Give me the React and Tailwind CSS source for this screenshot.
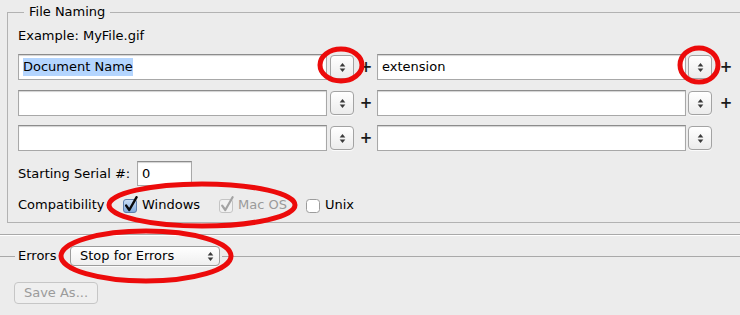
import React from 'react';

const font = { fontFamily: '"DejaVu Sans", "Liberation Sans", sans-serif' };

function Stepper({ className = '' }) {
  return (
    <div className={`flex h-[24px] w-[24px] items-center justify-center rounded-[4px] border border-[#a3a3a3] bg-gradient-to-b from-white to-[#ececec] shadow-[0_1px_0_rgba(255,255,255,0.8)] ${className}`}>
      <svg width="7" height="11" viewBox="0 0 7 11">
        <polygon points="3.5,1 6.3,4.6 0.7,4.6" fill="#3a3a3a" />
        <polygon points="0.7,6.4 6.3,6.4 3.5,10" fill="#3a3a3a" />
      </svg>
    </div>
  );
}

function TextBox({ value, selected, className = '' }) {
  return (
    <div className={`flex h-[26px] items-center border border-[#a8a8a8] border-t-[#8c8c8c] bg-white pl-[4px] shadow-[inset_0_1px_1px_rgba(0,0,0,0.18)] ${className}`}>
      {value && (
        <span className={`text-[13px] leading-[18px] text-black ${selected ? 'bg-[#b4d5fe]' : ''}`}>{value}</span>
      )}
    </div>
  );
}

function Plus({ hidden }) {
  return (
    <span className={`w-[14px] text-center text-[15px] font-bold leading-none text-[#1a1a1a] ${hidden ? 'invisible' : ''}`}>+</span>
  );
}

function NameRow({ left, right, selected, lastPlus = true }) {
  return (
    <div className="flex h-[26px] items-center">
      <TextBox value={left} selected={selected} className="w-[309px] self-stretch" />
      <Stepper className="ml-[3px]" />
      <div className="ml-[5px] flex w-[14px] justify-center"><Plus /></div>
      <TextBox value={right} className="ml-[4px] w-[309px] self-stretch" />
      <Stepper className="ml-[2px]" />
      <div className="ml-[7px] flex w-[14px] justify-center"><Plus hidden={!lastPlus} /></div>
    </div>
  );
}

function Check({ state }) {
  if (state === 'on') {
    return (
      <svg width="18" height="18" viewBox="0 0 18 18">
        <defs>
          <linearGradient id="bl" x1="0" y1="0" x2="0" y2="1">
            <stop offset="0" stopColor="#cfe1f6" />
            <stop offset="1" stopColor="#7fa9dc" />
          </linearGradient>
        </defs>
        <rect x="0.5" y="3.5" width="13" height="13" rx="2.5" fill="url(#bl)" stroke="#5d7fae" />
        <path d="M3.2 9.6 L6.3 14 L13.6 1.2" fill="none" stroke="#0b0b0b" strokeWidth="2.4" strokeLinecap="round" strokeLinejoin="round" />
      </svg>
    );
  }
  if (state === 'dis') {
    return (
      <svg width="18" height="18" viewBox="0 0 18 18">
        <rect x="0.5" y="3.5" width="13" height="13" rx="2.5" fill="#f1f1f1" stroke="#c4c4c4" />
        <path d="M3.2 9.6 L6.3 14 L13.6 1.2" fill="none" stroke="#a3a3a3" strokeWidth="2.2" strokeLinecap="round" strokeLinejoin="round" />
      </svg>
    );
  }
  return (
    <svg width="18" height="18" viewBox="0 0 18 18">
      <rect x="0.5" y="3.5" width="13" height="13" rx="3" fill="#ffffff" stroke="#9c9c9c" />
    </svg>
  );
}

export default function App() {
  return (
    <div style={font} className="relative h-[315px] w-[740px] overflow-hidden bg-[#ececec] pt-[4px] text-[13px] text-black">
      <fieldset className="ml-[7px] w-[760px] border border-[#b2b2b2] px-[10px] pb-[9px] pt-0">
        <legend className="ml-[6px] px-[5px] text-[13px] leading-[16px]">File Naming</legend>
        <div className="mt-[8px] leading-[16px]">Example: MyFile.gif</div>

        <div className="mt-[10px]">
          <NameRow left="Document Name" right="extension" selected />
        </div>
        <div className="mt-[10px]">
          <NameRow />
        </div>
        <div className="mt-[9px]">
          <NameRow lastPlus={false} />
        </div>

        <div className="mt-[10px] flex h-[25px] items-center">
          <span className="w-[119px] leading-[16px]">Starting Serial #:</span>
          <div className="flex h-[25px] w-[55px] items-center border border-[#a8a8a8] border-t-[#8c8c8c] bg-white pl-[4px] shadow-[inset_0_1px_1px_rgba(0,0,0,0.18)]">
            0
          </div>
        </div>

        <div className="mt-[11px] flex h-[16px] items-center leading-[16px]">
          <span className="w-[105px]">Compatibility</span>
          <div className="flex items-center">
            <Check state="on" />
            <span className="ml-[1px]">Windows</span>
          </div>
          <div className="ml-[19px] flex items-center text-[#9a9a9a]">
            <Check state="dis" />
            <span className="ml-[1px]">Mac OS</span>
          </div>
          <div className="ml-[19px] flex items-center">
            <Check state="off" />
            <span className="ml-[1px]">Unix</span>
          </div>
        </div>
      </fieldset>

      <div className="mt-[11px] h-px w-full bg-[#a9a9a9] shadow-[0_1px_0_#ffffff]" />

      <div className="mt-[11px] flex h-[20px] items-center">
        <div className="h-px w-[15px] bg-[#a9a9a9]" />
        <span className="ml-[3px] w-[38px] leading-[16px]">Errors</span>
        <div className="ml-[14px] flex h-[20px] w-[150px] items-center justify-between rounded-[4px] border border-[#9c9c9c] bg-gradient-to-b from-white to-[#efefef] pl-[9px] pr-[5px] shadow-[0_1px_0_rgba(255,255,255,0.8)]">
          <span className="leading-[16px]">Stop for Errors</span>
          <svg width="7" height="11" viewBox="0 0 7 11">
            <polygon points="3.5,1 6.3,4.6 0.7,4.6" fill="#3a3a3a" />
            <polygon points="0.7,6.4 6.3,6.4 3.5,10" fill="#3a3a3a" />
          </svg>
        </div>
        <div className="ml-[2px] h-px flex-1 bg-[#a9a9a9]" />
      </div>

      <div className="ml-[14px] mt-[16px] flex h-[22px] w-[84px] items-center justify-center rounded-[4px] border border-[#c6c6c6] bg-[#efefef] text-[#9b9b9b]">
        Save As...
      </div>

      <svg className="pointer-events-none absolute left-0 top-0" width="740" height="315" viewBox="0 0 740 315">
        <g fill="none" stroke="#ec0b0b" strokeWidth="5">
          <ellipse cx="341" cy="65" rx="21" ry="16" />
          <ellipse cx="699" cy="65" rx="19" ry="17" />
          <ellipse cx="202" cy="205" rx="93" ry="21" />
          <ellipse cx="146" cy="256" rx="85" ry="25" />
        </g>
      </svg>
    </div>
  );
}
